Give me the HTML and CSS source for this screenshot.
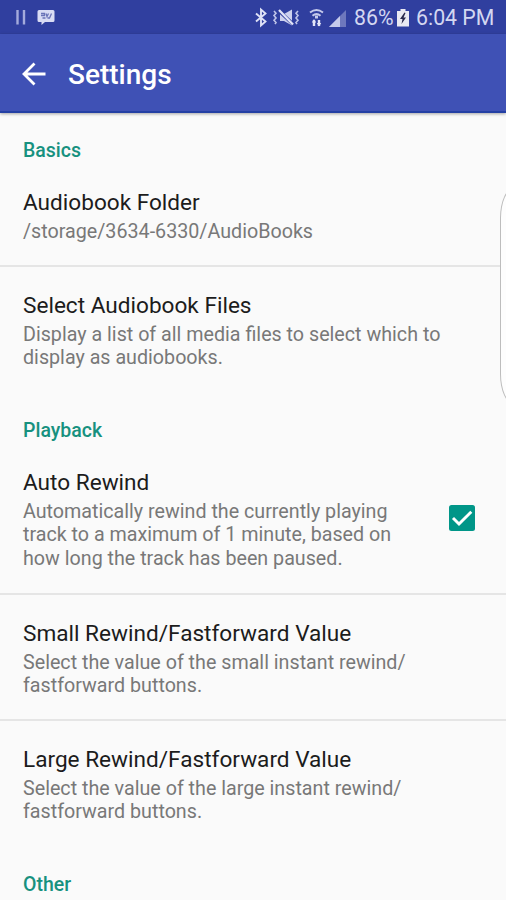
FILE: index.html
```html
<!DOCTYPE html>
<html lang="en">
<head>
  <meta charset="UTF-8">
  <title>Settings</title>
  <link rel="stylesheet" href="styles.css">
</head>
<body>

  <!-- Status bar -->
  <div class="status-bar">
    <svg class="status-left" width="60" height="34" viewBox="0 0 60 34">
      <path d="M17.500 10v14.500M24 10v14.500" stroke="#a4abdc" stroke-width="2.400"/>
      <path d="M39 10h14q1.500 0 1.500 1.500v9q0 1.500-1.500 1.500h-8l-3.500 3v-3H39q-1.500 0-1.500-1.500v-9Q37.500 10 39 10z" fill="#d9dcf4"/>
      <path d="M41 13.500h3.500v2H41M46 13.500l1 3 1.500-3M42.500 18h3M47.500 18h2l2-4.500" fill="none" stroke="#6b74b8" stroke-width="1.300"/>
    </svg>
    <svg class="status-right" width="96" height="34" viewBox="252 0 96 34">
      <!-- bluetooth -->
      <path d="M256 13.500l9.500 8-4.500 4V9.500l4.500 4-9.500 8" fill="none" stroke="#dfe2f6" stroke-width="1.900"/>
      <!-- vibrate / mute -->
      <path d="M280 14h4l8-4.500v16l-8-4.500h-4z" fill="#cdd1ee"/>
      <path d="M278 10l16 15" stroke="#303f9f" stroke-width="3.500"/>
      <path d="M279 10l14 14.500" stroke="#e2e4f7" stroke-width="2.300"/>
      <path d="M274 11l2 2.300-2 2.300 2 2.300-2 2.300 2 2.300-1 1.500M298 11l-2 2.300 2 2.300-2 2.300 2 2.300-2 2.300 1 1.500" fill="none" stroke="#bfc4e8" stroke-width="1.600"/>
      <!-- wifi -->
      <path d="M310 12.500q6.500-5 13 0M312.500 15.700q4-3.600 8 0" fill="none" stroke="#c5caeb" stroke-width="1.900"/>
      <path d="M316.500 15.500v3" stroke="#c5caeb" stroke-width="3"/>
      <path d="M314 26v-6M319 20v6" stroke="#e2e4f7" stroke-width="2.400"/>
      <path d="M311.800 22.500h4.400l-2.200-3.500zM316.800 23h4.400l-2.200 3.500z" fill="#e2e4f7"/>
      <!-- signal -->
      <path d="M329 27l17-17v17z" fill="#6e78bd"/>
      <path d="M329 27l11-11v11z" fill="#c5caeb"/>
    </svg>
    <span class="battery-level">86%</span>
    <svg class="battery" width="12" height="34" viewBox="0 0 12 34">
      <path d="M3.500 9h5v2H12v15.500H0V11h3.500z" fill="#e9e9f2"/>
      <path d="M7.500 12.500L3 19h2.500l-1 5 4.500-6.500H6.500L8.500 13z" fill="#29294c"/>
    </svg>
    <span class="clock">6:04 PM</span>
  </div>

  <!-- Toolbar -->
  <header class="toolbar">
    <svg class="back" width="26" height="26" viewBox="0 0 26 26">
      <path d="M24.500 13H3M13.500 2.500L3 13l10.500 10.500" fill="none" stroke="#fff" stroke-width="2.800"/>
    </svg>
    <h1 class="toolbar-title">Settings</h1>
  </header>

  <!-- Preferences -->
  <main class="preferences">
    <h2 class="category">Basics</h2>
    <section class="preference folder">
      <h3 class="title">Audiobook Folder</h3>
      <p class="summary">/storage/3634-6330/AudioBooks</p>
    </section>
    <section class="preference select">
      <h3 class="title">Select Audiobook Files</h3>
      <p class="summary">Display a list of all media files to select which to<br>display as audiobooks.</p>
    </section>

    <h2 class="category">Playback</h2>
    <section class="preference rewind">
      <div>
        <h3 class="title">Auto Rewind</h3>
        <p class="summary">Automatically rewind the currently playing<br>track to a maximum of 1 minute, based on<br>how long the track has been paused.</p>
      </div>
      <svg class="checkbox" width="26" height="26" viewBox="0 0 26 26">
        <rect width="26" height="26" rx="2.500" fill="#009688"/>
        <path d="M4 13l6 6L22.300 6.700" fill="none" stroke="#fff" stroke-width="2.900"/>
      </svg>
    </section>
    <section class="preference small">
      <h3 class="title">Small Rewind/Fastforward Value</h3>
      <p class="summary">Select the value of the small instant rewind/<br>fastforward buttons.</p>
    </section>
    <section class="preference large">
      <h3 class="title">Large Rewind/Fastforward Value</h3>
      <p class="summary">Select the value of the large instant rewind/<br>fastforward buttons.</p>
    </section>

    <h2 class="category">Other</h2>
  </main>

  <!-- Edge panel handle, over the list -->
  <div class="edge-panel"></div>

</body>
</html>
```

FILE: styles.css
```css
html,
body {
  margin: 0;
  height: 900px;
  overflow: hidden;
}

body {
  position: relative;
  background-color: #fafafa;
  font-family: Roboto, "Liberation Sans", sans-serif;
}

h1,
h2,
h3,
p {
  margin: 0;
}

svg {
  display: block;
  flex: none;
}

.status-bar {
  display: flex;
  align-items: center;
  height: 34px;
  background-color: #303f9f;
  color: #d3d7f1;
  font-size: 21.300px;
  line-height: 36px;
  white-space: nowrap;
}

.status-left {
  margin-right: 192px;
}

.battery-level {
  width: 43px;
  margin-left: 6px;
  padding-top: 2px;
}

.clock {
  margin-left: 7px;
  padding-top: 2px;
}

.toolbar {
  display: flex;
  align-items: center;
  height: 79px;
  box-sizing: border-box;
  padding-left: 21px;
  background-color: #3f51b5;
  border-bottom: 2px solid #2440a4;
  box-shadow: 0 1px 3px rgba(0, 0, 0, 0.35);
  color: #fff;
}

.back {
  margin-top: 2px;
}

.toolbar-title {
  margin: 4px 0 0 21px;
  font-size: 28px;
  font-weight: 500;
  line-height: 32px;
}

.category {
  height: 24px;
  padding: 26px 23px 15px;
  color: #17917f;
  font-size: 19.5px;
  font-weight: 500;
  line-height: 24px;
}

.preference {
  box-sizing: border-box;
  padding: 11px 23px 0;
  border-bottom: 2px solid #e5e5e5;
}

.title {
  color: #1c1c1c;
  font-size: 22.600px;
  font-weight: 400;
  line-height: 28px;
}

.summary {
  margin-top: 3px;
  color: #787878;
  font-size: 19.700px;
  line-height: 23.300px;
}

.folder {
  height: 89px;
}

.select {
  height: 126px;
  padding-top: 25px;
  border-bottom: 0;
}

.rewind {
  display: flex;
  justify-content: space-between;
  height: 137px;
  padding-right: 31px;
}

.checkbox {
  margin-top: 36px;
}

.small {
  height: 126px;
  padding-top: 25px;
}

.large {
  height: 126px;
  padding-top: 25px;
  border-bottom: 0;
}

.edge-panel {
  position: absolute;
  top: 188px;
  left: 500px;
  width: 30px;
  height: 216px;
  box-sizing: border-box;
  border: 1.500px solid #bdbdbd;
  border-radius: 14px / 30px;
  background-color: #fdfdfd;
}
```
